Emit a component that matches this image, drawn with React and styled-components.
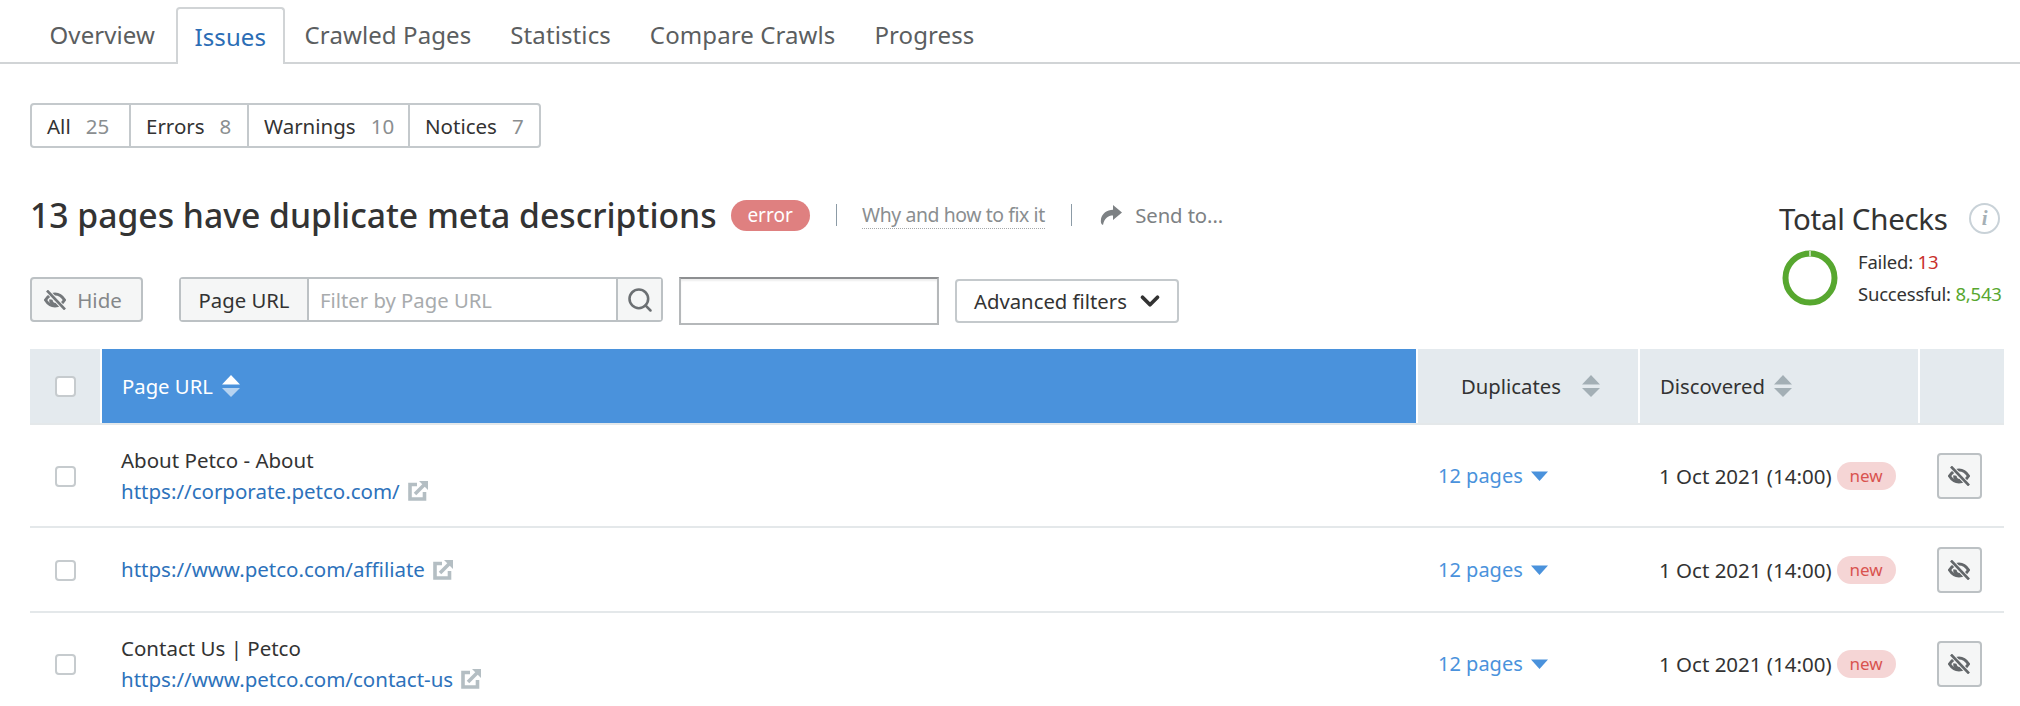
import { ChevronDown, Search } from "lucide-react";
import styled, { createGlobalStyle } from "styled-components";

const Global = createGlobalStyle`
  body {
    margin: 0;
    background: #fff;
    font-family: "Noto Sans", "Open Sans", sans-serif;
    color: #333;
  }
`;

const Page = styled.div`
  width: 2020px;
  height: 706px;
  overflow: hidden;
`;

const TabBar = styled.div`
  display: flex;
  height: 55px;
  margin-top: 7px;
  padding-left: 30px;
  border-bottom: 2px solid #d1d4d6;
`;

const Tab = styled.div`
  display: flex;
  align-items: center;
  height: 55px;
  padding: 0 19.5px;
  font-size: 24px;
  line-height: 50px;
  letter-spacing: 0.1px;
  color: ${(p) => (p.$active ? "#2b6db5" : "#5b5e60")};
  ${(p) =>
    p.$active &&
    `
    margin-left: 1px;
    padding: 0 17px;
    background: #fff;
    height: 57px;
    box-sizing: border-box;
    border: 2px solid #d1d4d6;
    border-bottom: none;
    border-radius: 4px 4px 0 0;
  `}
`;

const Content = styled.div`
  display: flex;
  justify-content: space-between;
  padding: 39px 16px 0 30px;
  height: 285px;
  box-sizing: border-box;
  width: 100%;
`;

const Left = styled.div`
  display: flex;
  flex-direction: column;
`;

const Pills = styled.div`
  display: flex;
  align-self: flex-start;
  flex: none;
  height: 45px;
  box-sizing: border-box;
  border: 2px solid #c4c9cc;
  border-radius: 4px;
`;

const Pill = styled.div`
  display: flex;
  align-items: center;
  gap: 15px;
  box-sizing: border-box;
  width: ${(p) => p.$width}px;
  padding-left: 15px;
  font-size: 20.5px;
  color: #333;
  & + & {
    border-left: 2px solid #c4c9cc;
  }
  span {
    color: #8a8e90;
  }
`;

const HeadingRow = styled.div`
  display: flex;
  align-items: center;
  flex: none;
  margin-top: 50px;
  height: 34px;
`;

const Heading = styled.h1`
  margin: 0;
  font-size: 33.7px;
  font-weight: 500;
  color: #333;
  white-space: nowrap;
`;

const ErrorBadge = styled.div`
  display: flex;
  align-items: center;
  justify-content: center;
  width: 79px;
  height: 31px;
  margin-left: 14px;
  border-radius: 16px;
  background: #df8080;
  color: #fff;
  font-size: 19px;
`;

const Sep = styled.div`
  width: 1.5px;
  height: 22px;
  background: #8c9ba6;
  margin: 0 ${(p) => p.$right}px 0 ${(p) => p.$left}px;
`;

const HelpLink = styled.div`
  font-size: 19.4px;
  letter-spacing: -0.4px;
  color: #8a8e90;
  border-bottom: 1px dotted #a5a8aa;
  white-space: nowrap;
`;

const SendTo = styled.div`
  display: flex;
  align-items: center;
  gap: 13px;
  font-size: 20.3px;
  letter-spacing: -0.1px;
  color: #7d8184;
  white-space: nowrap;
`;

const Toolbar = styled.div`
  display: flex;
  align-items: flex-start;
  flex: none;
  margin-top: 45px;
`;

const Button = styled.div`
  display: flex;
  align-items: center;
  justify-content: center;
  box-sizing: border-box;
  background: #f5f6f6;
  border: 2px solid #bcc1c4;
  border-radius: 4px;
`;

const HideButton = styled(Button)`
  width: 113px;
  height: 45px;
  margin-right: 36px;
  padding-right: 7px;
  gap: 11px;
  font-size: 20.5px;
  color: #85888a;
`;

const Filter = styled.div`
  display: flex;
  width: 484px;
  height: 45px;
  box-sizing: border-box;
  border: 2px solid #bcc1c4;
  border-radius: 4px;
`;

const FilterLabel = styled.div`
  display: flex;
  align-items: center;
  justify-content: center;
  width: 126px;
  background: #f5f6f6;
  border-right: 2px solid #bcc1c4;
  font-size: 20.3px;
`;

const FilterInput = styled.div`
  display: flex;
  align-items: center;
  flex: 1;
  padding-left: 11px;
  font-size: 20.3px;
  color: #a8abad;
`;

const FilterSearch = styled.div`
  display: flex;
  align-items: center;
  justify-content: center;
  width: 43px;
  background: #f5f6f6;
  border-left: 2px solid #bcc1c4;
  color: #6c7073;
`;

const EmptyInput = styled.div`
  width: 260px;
  height: 48px;
  box-sizing: border-box;
  margin: 0 16px;
  border: 2px solid #b5b8ba;
  border-top-color: #8d8f91;
  box-shadow: inset 0 2px 2px #eee;
`;

const SelectButton = styled.div`
  display: flex;
  align-items: center;
  justify-content: space-between;
  box-sizing: border-box;
  width: 224px;
  height: 44px;
  margin-top: 2px;
  padding: 0 12px 0 17px;
  border: 2px solid #c4c9cc;
  border-radius: 4px;
  font-size: 20.3px;
  white-space: nowrap;
`;

const Checks = styled.div`
  display: flex;
  flex-direction: column;
  width: 225px;
  margin-top: 95px;
`;

const ChecksTitle = styled.div`
  display: flex;
  align-items: center;
  justify-content: space-between;
  height: 40px;
  font-size: 29.5px;
  letter-spacing: -0.3px;
  color: #333;
`;

const Info = styled.div`
  display: flex;
  align-items: center;
  justify-content: center;
  box-sizing: border-box;
  width: 31px;
  height: 31px;
  margin-right: 4px;
  border: 2px solid #c9d2d8;
  border-radius: 50%;
  font-family: "Liberation Serif", serif;
  font-style: italic;
  font-weight: 700;
  font-size: 21px;
  color: #a6b0b6;
`;

const ChecksBody = styled.div`
  display: flex;
  align-items: center;
  gap: 20px;
  margin-top: 11px;
  padding-left: 3px;
`;

const ChecksText = styled.div`
  display: flex;
  flex-direction: column;
  gap: 7px;
  font-size: 18.5px;
  letter-spacing: -0.2px;
  line-height: 25px;
  white-space: nowrap;
`;

const Num = styled.span`
  color: ${(p) => p.$color};
`;

const Row = styled.div`
  display: grid;
  grid-template-columns: 70px 1316px 222px 280px 86px;
  width: 1974px;
  margin-left: 30px;
  height: ${(p) => p.$height}px;
  box-sizing: border-box;
  border-bottom: 2px solid #e4e8ea;
`;

const HeadCell = styled.div`
  display: flex;
  align-items: center;
  gap: ${(p) => p.$gap || 9}px;
  padding-left: ${(p) => p.$pad || 0}px;
  background: ${(p) => (p.$sorted ? "#4a92dc" : "#e4eaee")};
  color: ${(p) => (p.$sorted ? "#fff" : "#333")};
  font-size: 20.3px;
  & + & {
    border-left: 2px solid #fff;
  }
`;

const Cell = styled.div`
  display: flex;
  align-items: center;
  min-width: 0;
`;

const CheckCell = styled(Cell)`
  justify-content: center;
  padding-top: 2px;
`;

const HeadCheckCell = styled(HeadCell)`
  justify-content: center;
`;

const Checkbox = styled.div`
  width: 21px;
  height: 21px;
  box-sizing: border-box;
  background: #fff;
  border: 2px solid #c6cbce;
  border-radius: 4px;
`;

const UrlCell = styled(Cell)`
  flex-direction: column;
  align-items: flex-start;
  justify-content: center;
  gap: 3px;
  padding: 0 0 1px 21px;
  font-size: 20.5px;
  line-height: 28px;
`;

const UrlLine = styled.div`
  display: flex;
  align-items: center;
  gap: 8px;
  color: #2d72bb;
`;

const Pages = styled(Cell)`
  gap: 8px;
  padding-left: 22px;
  font-size: 20px;
  color: #4a92dc;
`;

const DateCell = styled(Cell)`
  gap: 5px;
  padding-left: 21px;
  font-size: 20.5px;
  white-space: nowrap;
`;

const NewBadge = styled.div`
  display: flex;
  align-items: center;
  justify-content: center;
  width: 59px;
  height: 28px;
  border-radius: 14px;
  background: #f5d5d5;
  color: #d9534f;
  font-size: 17px;
`;

const ActionCell = styled(Cell)`
  justify-content: center;
  padding-right: 4px;
`;

const EyeButton = styled(Button)`
  width: 45px;
  height: 46px;
`;

// both arrows of the column sort control, the active one drawn opaque
const SortIcon = ({ color, top = 1, bottom = 1 }) => (
  <svg width="18" height="24" viewBox="0 0 18 24">
    <path d="M9 1 L18 10.5 H0 Z" fill={color} opacity={top} />
    <path d="M0 14 H18 L9 23 Z" fill={color} opacity={bottom} />
  </svg>
);

const HiddenIcon = ({ color = "#63676a" }) => (
  <svg width="22" height="20" viewBox="0 0 22 20" fill="none" stroke={color} strokeWidth="3">
    <path d="M1.5 10 C4 6 7 4 11 4 C15 4 18 6 20.5 10 C18 14 15 16 11 16 C7 16 4 14 1.5 10 Z" />
    <path d="M7 9.5 A4.2 4.2 0 0 0 13 14" strokeWidth="3.4" />
    <path d="M3 0.5 L21 19.5" stroke="#f5f6f6" strokeWidth="4.6" />
    <path d="M3 0.5 L21 19.5" strokeWidth="2.6" />
  </svg>
);

const ExternalIcon = () => (
  <svg width="21" height="21" viewBox="0 0 21 21" fill="none" stroke="#b4bec3" strokeWidth="3.6">
    <path d="M9 4.5 H2 V19 H16.5 V12" />
    <path d="M7 14 L16 5" />
    <path d="M11 1 H20 V10 L11 1 Z" fill="#b4bec3" stroke="none" />
  </svg>
);

const SendIcon = () => (
  <svg width="22" height="20" viewBox="0 0 22 20">
    <path
      d="M13 0 L22 7.5 L13 15 V10.5 C8 10.5 4.5 13 3 20 C1 19.5 0.5 17 1 14 C2 8.5 7 5 13 4.8 Z"
      fill="#7d8184"
    />
  </svg>
);

const Caret = () => (
  <svg width="17" height="10" viewBox="0 0 17 10">
    <path d="M0 0.5 H17 L8.5 10 Z" fill="#4a92dc" />
  </svg>
);

const Donut = () => (
  <svg width="56" height="56" viewBox="0 0 56 56" fill="none">
    <circle cx="28" cy="28" r="24.5" stroke="#57a72f" strokeWidth="6" />
    <path d="M28 1 V6" stroke="#fff" strokeWidth="1.2" />
  </svg>
);

const rows = [
  { height: 103, title: "About Petco - About", url: "https://corporate.petco.com/" },
  { height: 85, url: "https://www.petco.com/affiliate" },
  { height: 103, title: "Contact Us | Petco", url: "https://www.petco.com/contact-us" },
];

export default function App() {
  return (
    <Page>
      <Global />
      <TabBar>
        <Tab>Overview</Tab>
        <Tab $active>Issues</Tab>
        <Tab>Crawled Pages</Tab>
        <Tab>Statistics</Tab>
        <Tab>Compare Crawls</Tab>
        <Tab>Progress</Tab>
      </TabBar>

      <Content>
        <Left>
          <Pills>
            <Pill $width={97}>All <span>25</span></Pill>
            <Pill $width={118}>Errors <span>8</span></Pill>
            <Pill $width={161}>Warnings <span>10</span></Pill>
            <Pill $width={131}>Notices <span>7</span></Pill>
          </Pills>
          <HeadingRow>
            <Heading>13 pages have duplicate meta descriptions</Heading>
            <ErrorBadge>error</ErrorBadge>
            <Sep $left={26} $right={25} />
            <HelpLink>Why and how to fix it</HelpLink>
            <Sep $left={26} $right={28} />
            <SendTo><SendIcon />Send to...</SendTo>
          </HeadingRow>
          <Toolbar>
            <HideButton><HiddenIcon color="#74787b" />Hide</HideButton>
            <Filter>
              <FilterLabel>Page URL</FilterLabel>
              <FilterInput>Filter by Page URL</FilterInput>
              <FilterSearch><Search size={28} strokeWidth={2.2} /></FilterSearch>
            </Filter>
            <EmptyInput />
            <SelectButton>Advanced filters <ChevronDown size={30} strokeWidth={3} color="#333" /></SelectButton>
          </Toolbar>
        </Left>
        <Checks>
          <ChecksTitle>Total Checks <Info>i</Info></ChecksTitle>
          <ChecksBody>
            <Donut />
            <ChecksText>
              <div>Failed: <Num $color="#c9302c">13</Num></div>
              <div>Successful: <Num $color="#57a72f">8,543</Num></div>
            </ChecksText>
          </ChecksBody>
        </Checks>
      </Content>

      <Row $height={76}>
        <HeadCheckCell><Checkbox /></HeadCheckCell>
        <HeadCell $sorted $pad={20}>Page URL <SortIcon color="#fff" bottom={0.6} /></HeadCell>
        <HeadCell $pad={43} $gap={21}>Duplicates <SortIcon color="#a3afb5" /></HeadCell>
        <HeadCell $pad={20}>Discovered <SortIcon color="#a3afb5" /></HeadCell>
        <HeadCell />
      </Row>
      {rows.map((row) => (
        <Row key={row.url} $height={row.height}>
          <CheckCell><Checkbox /></CheckCell>
          <UrlCell>
            {row.title && <div>{row.title}</div>}
            <UrlLine>{row.url} <ExternalIcon /></UrlLine>
          </UrlCell>
          <Pages>12 pages <Caret /></Pages>
          <DateCell>1 Oct 2021 (14:00) <NewBadge>new</NewBadge></DateCell>
          <ActionCell>
            <EyeButton><HiddenIcon /></EyeButton>
          </ActionCell>
        </Row>
      ))}
    </Page>
  );
}
